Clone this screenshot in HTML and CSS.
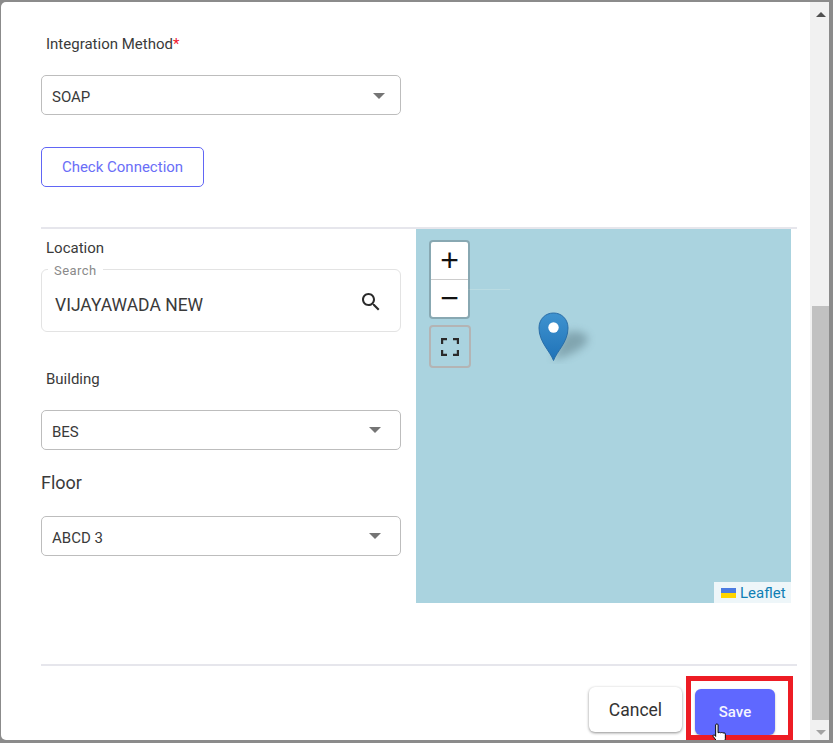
FILE: index.html
```html
<!DOCTYPE html>
<html lang="en">
<head>
<meta charset="utf-8">
<title>Integration</title>
<link rel="stylesheet" href="styles.css">
</head>
<body>
<div class="dialog">
  <main class="content">
    <div class="label method-label">Integration Method<span class="req">*</span></div>
    <div class="select method-select"><span>SOAP</span><i class="caret caret-soap"></i></div>
    <button class="check">Check Connection</button>
    <hr class="rule rule-top">
    <section class="split">
      <div class="fields">
        <div class="label loc-label">Location</div>
        <fieldset class="search">
          <legend>Search</legend>
          <span class="search-value">VIJAYAWADA NEW</span>
          <svg class="search-icon" viewBox="0 0 24 24" width="24" height="24"><path fill="#2b2b2b" d="M15.5 14h-.79l-.28-.27C15.41 12.59 16 11.11 16 9.5 16 5.91 13.09 3 9.5 3S3 5.91 3 9.5 5.91 16 9.5 16c1.61 0 3.09-.59 4.23-1.57l.27.28v.79l5 4.99L20.49 19l-4.99-5zm-6 0C7.01 14 5 11.99 5 9.5S7.01 5 9.5 5 14 7.01 14 9.5 11.99 14 9.5 14z"/></svg>
        </fieldset>
        <div class="label bld-label">Building</div>
        <div class="select bld-select"><span>BES</span><i class="caret"></i></div>
        <div class="floor-label">Floor</div>
        <div class="select floor-select"><span>ABCD 3</span><i class="caret"></i></div>
      </div>
      <div class="map">
        <div class="coast"></div>
        <div class="zoom">
          <div class="zoom-btn zoom-in">+</div>
          <div class="zoom-btn">&minus;</div>
        </div>
        <div class="fullscreen">
          <svg viewBox="0 0 18 18" width="18" height="18"><path fill="none" stroke="#2a2a2a" stroke-width="2.400" d="M1 6V1h5M12 1h5v5M17 12v5h-5M6 17H1v-5"/></svg>
        </div>
        <svg class="marker" viewBox="0 0 60 52" width="60" height="52">
          <defs>
            <linearGradient id="pin" x1="0" y1="0" x2="0" y2="1"><stop offset="0" stop-color="#3f93cf"/><stop offset="1" stop-color="#1f72b8"/></linearGradient>
            <filter id="blur" x="-50%" y="-50%" width="200%" height="200%"><feGaussianBlur stdDeviation="4.500"/></filter>
          </defs>
          <path d="M15 48 L26 22 C34 17 47 19 50 26 C51 34 32 44 15 48Z" fill="#4a6670" opacity=".42" filter="url(#blur)"/>
          <path d="M15.5 48.5 C12 39 1 30 1 16 C1 7 7.5 1 15.5 1 C23.5 1 30 7 30 16 C30 30 19 39 15.5 48.5Z" fill="url(#pin)" stroke="#2a6ea8" stroke-width="1"/>
          <circle cx="15.5" cy="15.5" r="5.2" fill="#fff"/>
        </svg>
        <div class="attribution"><svg class="flag" viewBox="0 0 15 10" width="15" height="10"><rect width="15" height="5" fill="#4C7BE1"/><rect y="5" width="15" height="5" fill="#FFD500"/></svg> <a>Leaflet</a></div>
      </div>
    </section>
    <hr class="rule rule-bottom">
    <footer class="actions">
      <button class="btn cancel">Cancel</button>
      <button class="btn save">Save</button>
    </footer>
    <div class="highlight"></div>
    <svg class="cursor" viewBox="0 0 14 18" width="17" height="22"><path d="M3 1.500c0-1 2-1 2 0V8l1-.3c.5-.2 1 .1 1 .3l1-.2c.5 0 1 .2 1 .4l1-.1c.7 0 1 .4 1 1V13l-1 4H5l-1-2-3-4c-.5-1 .5-1.800 1.300-1L3 11Z" fill="#fff" stroke="#000" stroke-width=".8"/></svg>
  </main>
  <aside class="scrollbar">
    <i class="arrow-up"></i>
    <div class="thumb"></div>
    <i class="arrow-down"></i>
  </aside>
</div>
</body>
</html>
```

FILE: styles.css
```css
* { box-sizing: border-box; }
html, body { margin: 0; height: 100%; overflow: hidden; }
body {
  background: #8b8b8b;
  padding: 2px 4px 3px 1px;
  font-family: Roboto, "Liberation Sans", sans-serif;
  color: #333;
}
.dialog {
  display: flex;
  height: 738px;
  background: #fff;
  border-radius: 5px 0 0 5px;
  overflow: hidden;
}
.content {
  position: relative;
  width: 809px;
  padding: 0 12px 0 40px;
  flex: none;
}
.label { font-size: 15px; line-height: 16px; color: #3a3a3a; padding-left: 5px; }
.method-label { padding-top: 34px; height: 50px; }
.req { color: #f0142f; }
.select {
  width: 360px;
  height: 40px;
  border: 1px solid #bdbdbd;
  border-radius: 5px;
  display: flex;
  align-items: center;
  justify-content: space-between;
  padding: 3px 19px 0 10px;
  font-size: 15px;
  color: #3a3a3a;
  background: #fff;
}
.method-select { margin-top: 23px; padding-right: 15px; }
.caret {
  width: 0; height: 0;
  border-left: 6px solid transparent;
  border-right: 6px solid transparent;
  border-top: 6px solid #757575;
  margin-top: -3px;
}
.caret-soap { margin-top: -1px; }
.check {
  display: block;
  margin-top: 32px;
  width: 163px;
  height: 40px;
  background: #fff;
  border: 1px solid #6166f5;
  border-radius: 5px;
  color: #6a6ef7;
  font: 400 15px Roboto, "Liberation Sans", sans-serif;
  padding: 0;
}
.rule { border: 0; margin: 0; height: 2px; background: #e6e6ec; width: 756px; }
.rule-top { margin-top: 40px; }
.split { display: flex; height: 374px; }
.fields { width: 375px; }
.loc-label { padding-top: 11px; height: 31px; }
.search {
  padding: 0 10px 0 13px;
  width: 360px;
  height: 72px;
  margin: 0;
  border: 1px solid #e3e3e3;
  border-radius: 6px;
  display: flex;
  align-items: center;
  justify-content: space-between;
}
.search legend {
  font-size: 13px;
  line-height: 14px;
  color: #8a8a8a;
  padding: 4px 6px 0;
  letter-spacing: .45px;
  margin-left: -7px;
}
.search-value { font-size: 17.500px; color: #3a3a3a; margin-top: 0; }
.search-icon { margin-right: 7px; margin-top: -6px; }
.bld-label { margin-top: 39px; height: 16px; }
.bld-select { margin-top: 23px; }
.floor-label { font-size: 18px; line-height: 20px; margin-top: 23px; color: #3a3a3a; }
.floor-select { margin-top: 23px; }
.map {
  position: relative;
  width: 375px;
  height: 374px;
  background: #aad3df;
  overflow: hidden;
}
.coast { position: absolute; left: 52px; width: 42px; top: 60px; height: 1px; background: #b9dbe2; }
.zoom {
  position: absolute; left: 13px; top: 11px;
  width: 41px; height: 79px;
  background: #fff;
  border: 2px solid rgba(0,0,0,.2);
  border-radius: 4px;
  background-clip: padding-box;
}
.zoom-btn {
  height: 37.500px;
  display: flex; align-items: center; justify-content: center;
  font: 400 32px "Liberation Sans", sans-serif;
  color: #111;
}
.zoom-in { border-bottom: 1px solid #ccc; height: 38px; }
.fullscreen {
  position: absolute; left: 13px; top: 96px;
  width: 42px; height: 43px;
  border: 2px solid #b4b4b4;
  border-radius: 4px;
  display: flex; align-items: center; justify-content: center;
}
.marker { position: absolute; left: 122px; top: 83px; }
.attribution {
  position: absolute; right: 0; bottom: 0;
  height: 21px; width: 77px;
  background: rgba(255,255,255,.8);
  font-size: 15px;
  line-height: 21px;
  padding-left: 7px;
  padding-top: 1px;
  display: flex; align-items: center; gap: 4px;
}
.attribution a { color: #0f7fb5; }
.flag { flex: none; }
.rule-bottom { margin-top: 61px; }
.actions {
  display: flex;
  justify-content: flex-end;
  align-items: flex-start;
  gap: 13px;
  padding: 21px 23px 0 0;
}
.btn {
  border: 0; padding: 0;
  border-radius: 6px;
  font-family: Roboto, "Liberation Sans", sans-serif;
}
.cancel {
  width: 93px; height: 45px;
  background: #fff;
  font-size: 17.500px;
  font-weight: 400;
  color: #333;
  box-shadow: 0 1px 3px rgba(0,0,0,.45);
}
.save {
  width: 80px; height: 46px;
  margin-top: 2px;
  background: #5f68ff;
  color: #f4f4ff;
  font-size: 15px;
  font-weight: 500;
  box-shadow: 0 1px 2px rgba(0,0,0,.3);
}
.highlight {
  position: absolute;
  left: 685px; top: 674px;
  width: 107px; height: 65px;
  border: 5px solid #ed1c24;
  border-bottom-width: 6px;
}
.cursor { position: absolute; left: 711px; top: 721px; }
.scrollbar {
  position: relative;
  width: 20px;
  flex: none;
  background: #f1f1f1;
}
.thumb {
  position: absolute;
  left: 2px; right: 0; top: 304px; bottom: 20px;
  background: #c1c1c1;
}
.arrow-up, .arrow-down {
  position: absolute;
  left: 6px;
  width: 0; height: 0;
  border-left: 5px solid transparent;
  border-right: 5px solid transparent;
}
.arrow-up { top: 10px; border-bottom: 5px solid #505050; }
.arrow-down { bottom: 5px; border-top: 5px solid #a3a3a3; }
```
